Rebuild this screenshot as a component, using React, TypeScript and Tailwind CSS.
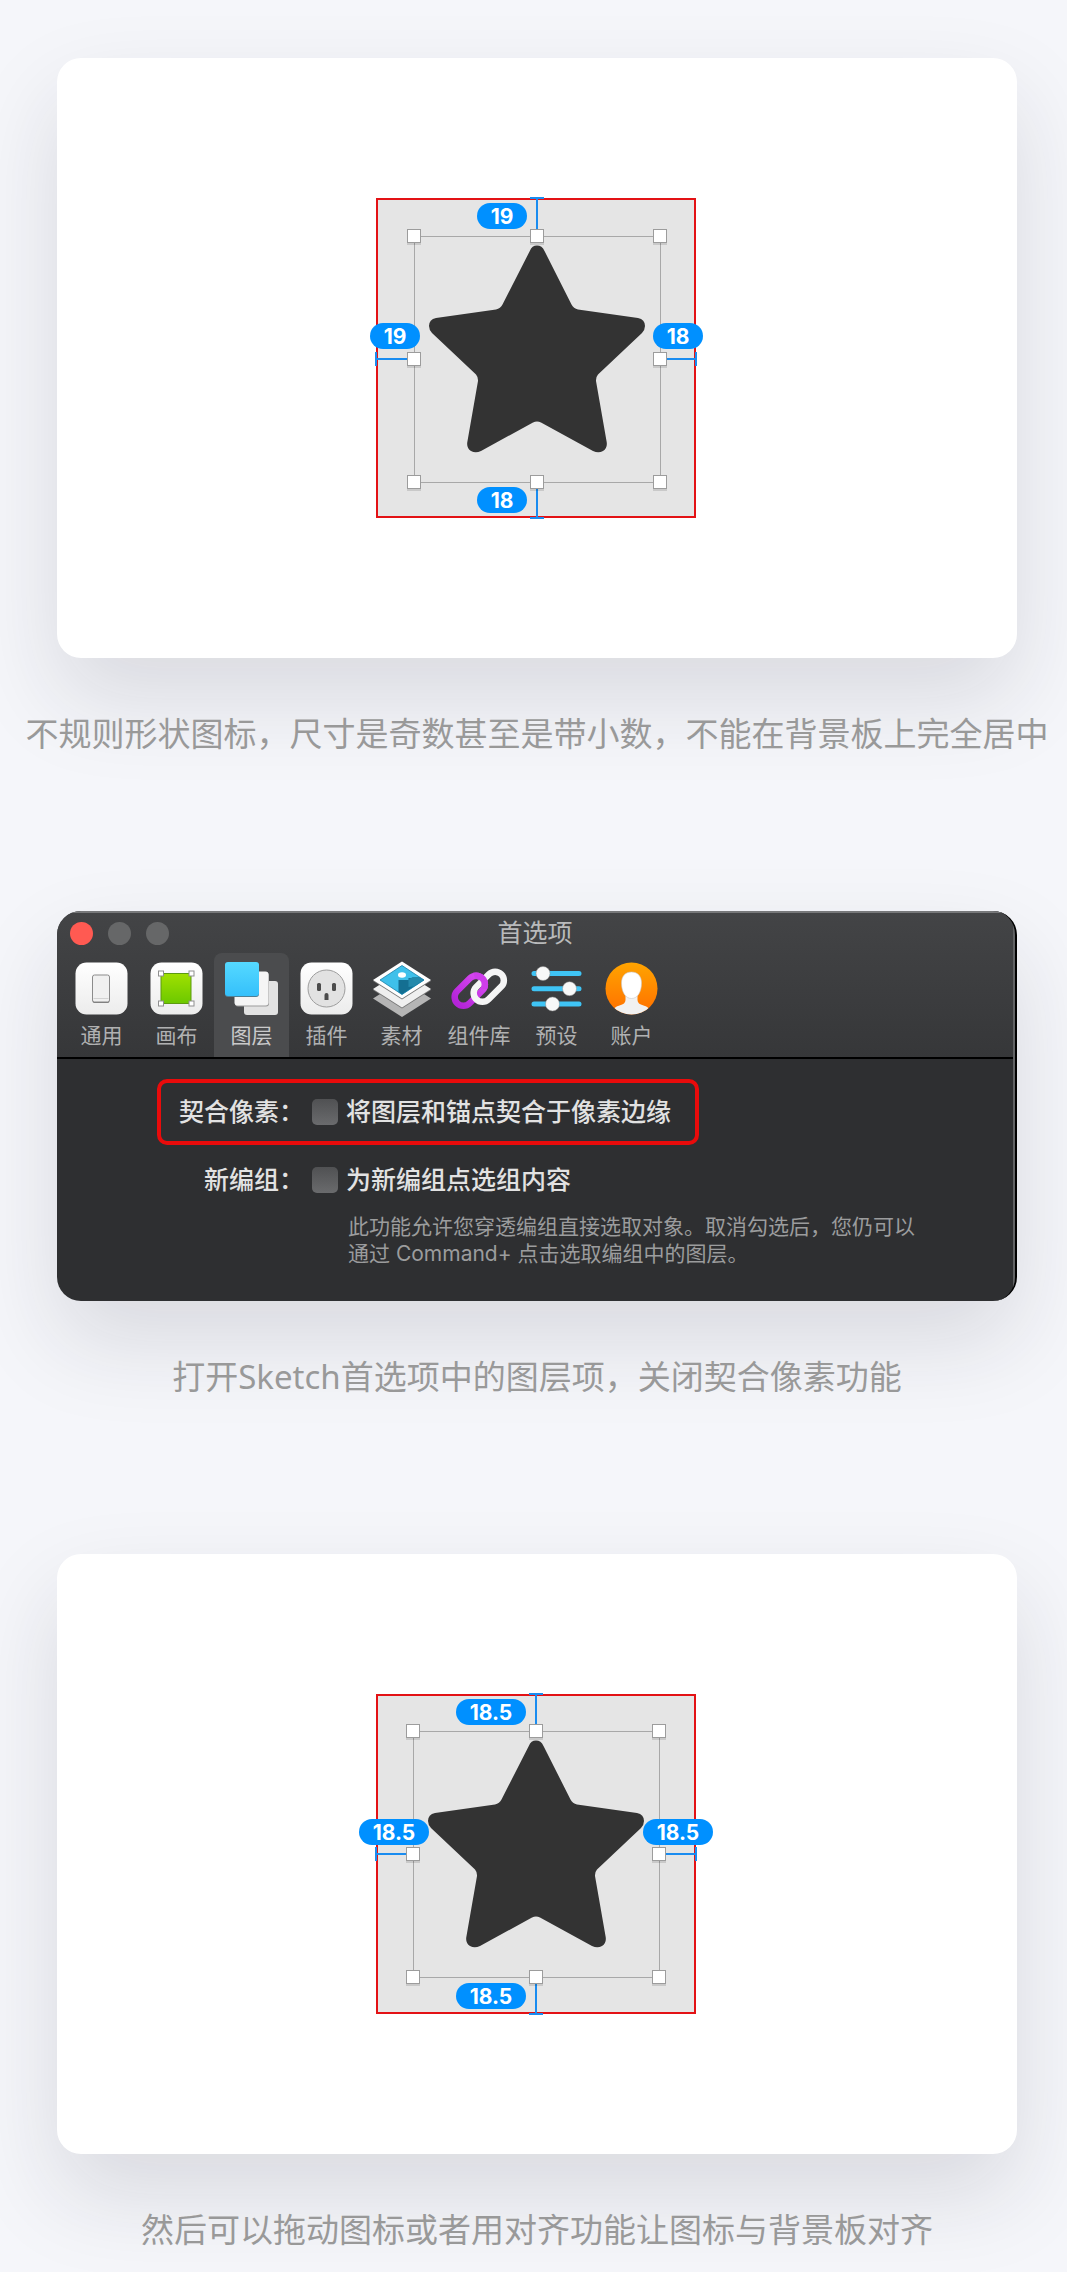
import { useState } from 'react';
import type { ReactNode } from 'react';

type Badge = { text: string; className: string };

const oddBadges: Badge[] = [
  { text: '19', className: 'left-[101px] top-[5px] w-[50px]' },
  { text: '19', className: 'left-[-6px] top-[125px] w-[50px]' },
  { text: '18', className: 'left-[277px] top-[125px] w-[50px]' },
  { text: '18', className: 'left-[101px] top-[289px] w-[50px]' },
];

const halfBadges: Badge[] = [
  { text: '18.5', className: 'left-[80px] top-[5px] w-[70px]' },
  { text: '18.5', className: 'left-[-17px] top-[125px] w-[70px]' },
  { text: '18.5', className: 'left-[267px] top-[125px] w-[70px]' },
  { text: '18.5', className: 'left-[80px] top-[289px] w-[70px]' },
];

const STAR_PATH =
  'M153.8 53 Q156 47.6 161 47.6 Q166 47.6 168.5 53 L195.5 106.5 Q197.500 110.500 202 111.500 L262 120 Q269 121.500 269 128 Q269 131.500 266 135 L222 176.500 Q219.800 179 220 183 L230.500 243 Q232 250 227 253 Q222.500 255.500 217 253 L165 224.500 Q161 222.500 157 224.500 L105 253 Q99.500 255.500 95 253 Q90 250 91.500 243 L102 183 Q102.200 179 100 176.500 L56 135 Q53 131.500 53 128 Q53 121.500 60 120 L120 111.500 Q124.500 110.500 126.500 106.500 Z';

/* Artboard with a selected star and its distance guides */
function Artboard({ badges, center }: { badges: Badge[]; center: number }) {
  const near = center - 123;
  const far = center + 123;
  const handles = [
    [near, near],
    [center, near],
    [far, near],
    [near, center],
    [far, center],
    [near, far],
    [center, far],
    [far, far],
  ];

  return (
    <div className="relative size-80">
      <svg viewBox="0 0 320 320" className="block size-80 overflow-visible">
        <rect x="1" y="1" width="318" height="318" fill="#e5e5e5" stroke="#e31215" strokeWidth="2" />
        <path d={STAR_PATH} fill="#333333" transform={`translate(${center - 161} ${center - 161})`} />
        <rect x={near + 0.5} y={near + 0.5} width="246" height="246" fill="none" stroke="#a8a8a8" />
        <g stroke="#1a8cf0" strokeWidth="2">
          <path d={`M${center} 0V${near} M${center} ${far}V320 M0 ${center}H${near} M${far} ${center}H320`} />
          <path d={`M${center - 7} 0h14 M${center - 7} 320h14 M0 ${center - 7}v14 M320 ${center - 7}v14`} />
        </g>
        {handles.map(([x, y]) => (
          <g key={`${x}-${y}`}>
            <rect x={x - 7} y={y - 5} width="14" height="14" fill="#000000" opacity="0.12" />
            <rect x={x - 6.5} y={y - 6.5} width="13" height="13" fill="#ffffff" stroke="#9c9c9c" />
          </g>
        ))}
      </svg>
      {badges.map((badge) => (
        <span
          key={badge.className}
          className={`absolute flex h-[26px] items-center justify-center rounded-full bg-[#0090ff] text-[21px] leading-none font-bold text-white font-[Inter,sans-serif] ${badge.className}`}
        >
          {badge.text}
        </span>
      ))}
    </div>
  );
}

function GeneralIcon() {
  return (
    <svg viewBox="0 0 53 53" className="size-[53px]">
      <defs>
        <linearGradient id="plate" x2="0" y2="1">
          <stop stopColor="#ffffff" />
          <stop offset="1" stopColor="#ececec" />
        </linearGradient>
      </defs>
      <rect x="0.5" y="0.5" width="52" height="52" rx="11" fill="url(#plate)" />
      <rect x="17.5" y="14" width="17" height="27" rx="2" fill="#777777" />
      <rect x="17.5" y="13" width="17" height="27" rx="2" fill="#f0f0f0" stroke="#8b8b8b" />
      <path d="M18.500 36.500h15" stroke="#d2d2d2" />
    </svg>
  );
}

function CanvasIcon() {
  return (
    <svg viewBox="0 0 53 53" className="size-[53px]">
      <defs>
        <linearGradient id="leaf" x2="0" y2="1">
          <stop stopColor="#a0e000" />
          <stop offset="1" stopColor="#6cc800" />
        </linearGradient>
      </defs>
      <rect x="0.5" y="0.5" width="52" height="52" rx="11" fill="url(#plate)" />
      <rect x="11" y="11.500" width="30" height="30" fill="url(#leaf)" stroke="#5c9a10" />
      {[11, 41.500].map((x) =>
        [11.500, 41.500].map((y) => (
          <rect key={`${x}-${y}`} x={x - 2.5} y={y - 2.5} width="5" height="5" fill="#ffffff" stroke="#8f8f8f" />
        )),
      )}
    </svg>
  );
}

function LayersIcon() {
  return (
    <svg viewBox="0 0 53 53" className="size-[53px]">
      <defs>
        <linearGradient id="sky" x2="0" y2="1">
          <stop stopColor="#55d9ff" />
          <stop offset="1" stopColor="#35c0fb" />
        </linearGradient>
      </defs>
      <rect x="19" y="19" width="34" height="34" rx="3" fill="#e2e2e2" />
      <rect x="10" y="10.500" width="34" height="34" rx="3" fill="#9b9b9b" />
      <rect x="9.500" y="9.500" width="34" height="34" rx="3" fill="#f5f5f5" />
      <rect x="0" y="1" width="34" height="34" rx="3" fill="#4f7f94" />
      <rect x="0" y="0" width="34" height="34" rx="3" fill="url(#sky)" />
    </svg>
  );
}

function PluginIcon() {
  return (
    <svg viewBox="0 0 53 53" className="size-[53px]">
      <rect x="0.5" y="0.5" width="52" height="52" rx="11" fill="url(#plate)" />
      <circle cx="26.500" cy="26.500" r="18.500" fill="#e2e2e2" stroke="#9d9d9d" />
      <g fill="#4c4c4c">
        <rect x="17" y="21" width="4" height="8" rx="1.500" />
        <rect x="32" y="21" width="4" height="8" rx="1.500" />
        <path d="M24.500 38v-5a2 2 0 0 1 4 0v5z" />
      </g>
    </svg>
  );
}

function AssetsIcon() {
  return (
    <svg viewBox="0 0 58 56" className="h-14 w-[58px]">
      <defs>
        <clipPath id="photo">
          <path d="M7 19L29 4.500L51 19L29 33.500Z" />
        </clipPath>
      </defs>
      <path d="M0 37.500L29 19L58 37.500L29 56Z" fill="#b5b5b5" />
      <path d="M0 29L29 10.500L58 29L29 47.500Z" fill="#777777" />
      <path d="M0 28L29 9.500L58 28L29 46.500Z" fill="#f0f0f0" />
      <path d="M0 20L29 1.500L58 20L29 38.500Z" fill="#777777" />
      <path d="M0 19L29 0.500L58 19L29 37.500Z" fill="#ffffff" />
      <g clipPath="url(#photo)">
        <rect x="6" y="4" width="46" height="30" fill="#3fc0ea" />
        <path d="M25.500 19h10v-2l16 1v16h-26z" fill="#146f92" />
        <path d="M35.500 19l4-3h12v8l-16 2z" fill="#2489ab" />
        <ellipse cx="29" cy="14" rx="4" ry="2.800" fill="#ffffff" />
      </g>
      <path d="M7 19L29 4.500L51 19L29 33.500Z" fill="none" stroke="#177fa8" strokeWidth="0.800" />
    </svg>
  );
}

function LibraryIcon() {
  return (
    <svg viewBox="0 0 57 53" className="h-[53px] w-[57px]" fill="none" strokeWidth="6.500">
      <defs>
        <linearGradient id="violet" x1="1" x2="0">
          <stop stopColor="#d84af2" />
          <stop offset="1" stopColor="#b424d8" />
        </linearGradient>
        <clipPath id="overlap">
          <path d="M20 5h20v22H28z" />
        </clipPath>
      </defs>
      <rect x="1" y="20" width="35.500" height="17.500" rx="8.750" stroke="url(#violet)" transform="rotate(-45 18.750 28.750)" />
      <rect x="20" y="16" width="35.500" height="17.500" rx="8.750" stroke="#f5f5f5" transform="rotate(-45 37.750 24.750)" />
      <g clipPath="url(#overlap)">
        <rect x="1" y="20" width="35.500" height="17.500" rx="8.750" stroke="#ce3deb" transform="rotate(-45 18.750 28.750)" />
      </g>
    </svg>
  );
}

function PresetsIcon() {
  return (
    <svg viewBox="0 0 53 53" className="size-[53px]">
      <path d="M4 11.500h45M4 26.700h45M4 42h45" stroke="#3fc4f5" strokeWidth="5" strokeLinecap="round" />
      <g fill="#f8f8f8" stroke="#8c8c8c" strokeWidth="0.500">
        <circle cx="13" cy="11.500" r="7" />
        <circle cx="39.500" cy="26.700" r="7" />
        <circle cx="22.500" cy="42" r="7" />
      </g>
    </svg>
  );
}

function AccountIcon() {
  return (
    <svg viewBox="0 0 53 53" className="size-[53px]">
      <defs>
        <linearGradient id="amber" x2="0" y2="1">
          <stop stopColor="#ffa400" />
          <stop offset="1" stopColor="#ff6f00" />
        </linearGradient>
        <clipPath id="disc">
          <circle cx="26.500" cy="26.500" r="26" />
        </clipPath>
      </defs>
      <circle cx="26.500" cy="26.500" r="26" fill="url(#amber)" />
      <g clipPath="url(#disc)">
        <path d="M20.500 30h12v8q0 4 6 5.500q5 1 6 5v6h-36v-6q1-4 6-5q6-1.500 6-5.500z" fill="#f1f1f1" />
        <path d="M26.500 10c6.500 0 10 4.500 10 11c0 9-4 15.500-10 15.500s-10-6.500-10-15.500c0-6.500 3.500-11 10-11z" fill="#ffffff" stroke="#c9c9c9" strokeWidth="0.600" />
      </g>
    </svg>
  );
}

const tabs = [
  { name: '通用', icon: <GeneralIcon /> },
  { name: '画布', icon: <CanvasIcon /> },
  { name: '图层', icon: <LayersIcon /> },
  { name: '插件', icon: <PluginIcon /> },
  { name: '素材', icon: <AssetsIcon /> },
  { name: '组件库', icon: <LibraryIcon /> },
  { name: '预设', icon: <PresetsIcon /> },
  { name: '账户', icon: <AccountIcon /> },
];

function Option({ name, text, highlighted }: { name: string; text: string; highlighted?: boolean }) {
  return (
    <label
      className={`flex h-[66px] w-fit items-center gap-2 rounded-[10px] border-4 pr-6 text-[25px] leading-8 font-medium text-[#e2e2e2] ${
        highlighted ? 'border-[#e90b0b]' : 'border-transparent'
      }`}
    >
      <span className="w-[143px] text-right whitespace-nowrap">{name}</span>
      <input
        type="checkbox"
        className="size-[26px] appearance-none rounded-[5px] bg-gradient-to-b from-[#505153] to-[#6a6b6d] checked:from-[#3b8df5] checked:to-[#2a70e0]"
      />
      <span>{text}</span>
    </label>
  );
}

function Preferences() {
  const [active, setActive] = useState('图层');

  return (
    <div className="overflow-hidden rounded-3xl border-r-2 border-black bg-[#2e2f31] shadow-[0_40px_90px_rgba(30,30,50,0.13)]">
      <div className="border-r-2 border-[#626365]">
        <header className="border-t-2 border-b-2 border-t-[#77787a] border-b-black bg-gradient-to-b from-[#434446] to-[#363739]">
          <div className="grid h-10 grid-cols-[1fr_auto_1fr] items-center px-[13px]">
            <div className="flex gap-[15px]">
              <button aria-label="关闭" className="size-[23px] rounded-full bg-[#ff5a52]" />
              <button aria-label="最小化" className="size-[23px] rounded-full bg-[#666768]" />
              <button aria-label="缩放" className="size-[23px] rounded-full bg-[#666768]" />
            </div>
            <h2 className="text-[25px] leading-8 text-[#b9babb]">首选项</h2>
          </div>
          <nav className="flex pl-[7px]">
            {tabs.map((tab) => (
              <button
                key={tab.name}
                onClick={() => setActive(tab.name)}
                className={`flex w-[75px] flex-col items-center gap-[9px] rounded-t-lg py-[9px] text-[21px] leading-6 whitespace-nowrap nth-[6]:w-20 ${
                  active === tab.name ? 'bg-[#4b4c4e] text-[#c9c9ca]' : 'text-[#b0b1b2]'
                }`}
              >
                <span className="flex h-[53px] items-center">{tab.icon}</span>
                {tab.name}
              </button>
            ))}
          </nav>
        </header>
        <div className="flex flex-col gap-[2px] pt-5 pb-[34px] pl-[100px]">
          <Option name="契合像素：" text="将图层和锚点契合于像素边缘" highlighted />
          <div>
            <Option name="新编组：" text="为新编组点选组内容" />
            <p className="pl-[191px] text-[21px] leading-[27px] text-[#9b9c9d]">
              此功能允许您穿透编组直接选取对象。取消勾选后，您仍可以
              <br />
              通过 Command+ 点击选取编组中的图层。
            </p>
          </div>
        </div>
      </div>
    </div>
  );
}

function Card({ children }: { children: ReactNode }) {
  return (
    <div className="flex items-center justify-center rounded-3xl bg-white py-[140px] pr-[2px] shadow-[0_40px_90px_rgba(30,30,50,0.13)]">
      {children}
    </div>
  );
}

function Figure({ caption, children }: { caption: string; children: ReactNode }) {
  return (
    <figure className="flex flex-col gap-[52px]">
      {children}
      <figcaption className="-mx-12 text-center text-[33px] leading-[48px] whitespace-nowrap text-[#999999] font-['Noto_Sans','Noto_Sans_CJK_SC',sans-serif]">
        {caption}
      </figcaption>
    </figure>
  );
}

export default function App() {
  return (
    <main
      lang="zh-CN"
      className="flex min-h-screen flex-col gap-[153px] overflow-hidden bg-[#f5f6fa] pt-[58px] pr-[50px] pb-[17px] pl-[57px] font-[Inter,'Noto_Sans_CJK_SC',sans-serif]"
    >
      <Figure caption="不规则形状图标，尺寸是奇数甚至是带小数，不能在背景板上完全居中">
        <Card>
          <Artboard badges={oddBadges} center={161} />
        </Card>
      </Figure>
      <Figure caption="打开Sketch首选项中的图层项，关闭契合像素功能">
        <Preferences />
      </Figure>
      <Figure caption="然后可以拖动图标或者用对齐功能让图标与背景板对齐">
        <Card>
          <Artboard badges={halfBadges} center={160} />
        </Card>
      </Figure>
    </main>
  );
}
